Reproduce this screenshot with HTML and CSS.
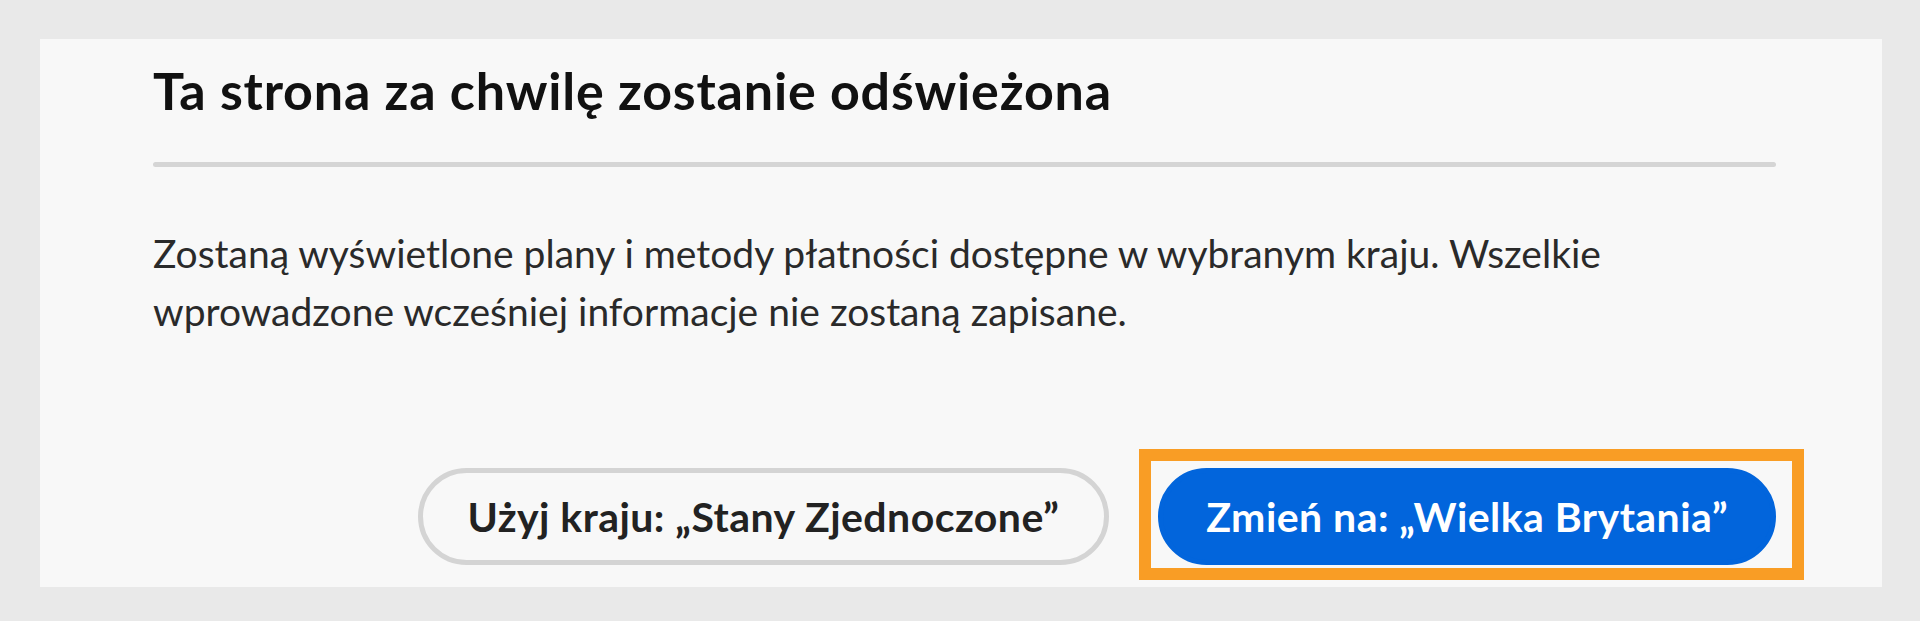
FILE: index.html
```html
<!DOCTYPE html>
<html lang="pl">
<head>
<meta charset="utf-8">
<title>Ta strona za chwilę zostanie odświeżona</title>
<link rel="stylesheet" href="styles.css">
</head>
<body>
  <div class="card">
    <h1 class="title">Ta strona za chwilę zostanie odświeżona</h1>
    <div class="divider"></div>
    <p class="text">Zostaną wyświetlone plany i metody płatności dostępne w wybranym kraju. Wszelkie<br>wprowadzone wcześniej informacje nie zostaną zapisane.</p>
    <div class="actions">
      <button class="btn btn-secondary">Użyj kraju: „Stany Zjednoczone”</button>
      <button class="btn btn-primary highlighted">Zmień na: „Wielka Brytania”</button>
    </div>
  </div>
</body>
</html>
```

FILE: styles.css
```css
html, body {
  margin: 0;
  padding: 0;
}

body {
  background: #e9e9e9;
  font-family: "Lato", "Noto Sans", sans-serif;
  height: 621px;
  overflow: hidden;
}

.card {
  box-sizing: border-box;
  margin: 39px 0 0 40px;
  width: 1842px;
  height: 548px;
  background: #f8f8f8;
  padding: 21px 106px 0 113px;
}

.title {
  margin: 0;
  font-size: 52px;
  line-height: 61px;
  letter-spacing: 0.8px;
  font-weight: 700;
  color: #111;
}

.divider {
  margin-top: 41px;
  height: 5px;
  border-radius: 3px;
  background: #d5d5d5;
}

.text {
  margin: 57px 0 0;
  font-size: 39px;
  line-height: 58px;
  font-weight: 400;
  color: #2a2a2a;
  white-space: nowrap;
}

.actions {
  margin-top: 128px;
  display: flex;
  justify-content: flex-end;
  gap: 49px;
}

.btn {
  position: relative;
  box-sizing: border-box;
  height: 97px;
  padding: 0 43px;
  border-radius: 49px;
  border: 5px solid transparent;
  font-family: "Lato", "Noto Sans", sans-serif;
  font-size: 41px;
  letter-spacing: 0.45px;
  font-weight: 700;
  white-space: nowrap;
  cursor: pointer;
}

.btn-secondary {
  background: transparent;
  border-color: #d4d4d4;
  color: #222;
  padding: 0 45px;
}

.btn-primary {
  background: #0265dc;
  border-color: #0265dc;
  color: #fff;
}

.highlighted::after {
  content: "";
  position: absolute;
  left: -24px;
  top: -24px;
  right: -33px;
  bottom: -20px;
  border: 12px solid #f99d25;
  pointer-events: none;
}
```
